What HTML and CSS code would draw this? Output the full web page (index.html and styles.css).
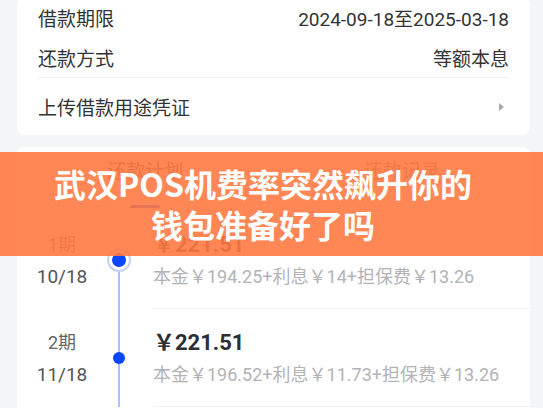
FILE: index.html
```html
<!DOCTYPE html>
<html lang="zh-CN">
<head>
  <meta charset="UTF-8">
  <meta name="viewport" content="width=device-width, initial-scale=1.0">
  <title>还款计划</title>
  <link rel="stylesheet" href="styles.css">
</head>
<body>
  <div class="page">
    <section class="card info">
      <div class="row"><span>借款期限</span><span>2024-09-18至2025-03-18</span></div>
      <div class="row"><span>还款方式</span><span>等额本息</span></div>
      <div class="row link"><span>上传借款用途凭证</span><span class="arrow"></span></div>
    </section>

    <section class="card plan">
      <div class="tabs">
        <div class="tab active">还款计划</div>
        <div class="tab">还款记录</div>
      </div>

      <div class="item first">
        <div class="when"><div>1期</div><div>10/18</div></div>
        <div class="axis"><span class="dot current"></span></div>
        <div class="detail">
          <div class="amount">￥221.51</div>
          <div class="parts">本金￥194.25+利息￥14+担保费￥13.26</div>
        </div>
      </div>

      <div class="item">
        <div class="when"><div>2期</div><div>11/18</div></div>
        <div class="axis"><span class="dot"></span></div>
        <div class="detail">
          <div class="amount">￥221.51</div>
          <div class="parts">本金￥196.52+利息￥11.73+担保费￥13.26</div>
        </div>
      </div>
    </section>
  </div>

  <div class="banner">武汉POS机费率突然飙升你的<br>钱包准备好了吗</div>
</body>
</html>
```

FILE: styles.css
```css
* { box-sizing: border-box; }
body { margin: 0; background: #f4f5f7; font-family: Roboto, "Noto Sans CJK SC", sans-serif; color: #333; }
.page { padding: 0 13px 0 17px; }
.card { background: #fff; border-radius: 8px; }

/* loan info */
.info { margin-top: -3px; padding: 0 21px; }
.row { display: flex; justify-content: space-between; align-items: center; height: 40px; font-size: 19px; }
.row.link { height: 58px; border-top: 1px solid #eeeff1; }
.arrow { width: 0; height: 0; margin-right: 5px; border-left: 5px solid #a8a8ad; border-top: 4px solid transparent; border-bottom: 4px solid transparent; }

/* repayment plan */
.plan { margin-top: 12px; padding-bottom: 20px; }
.tabs { display: flex; height: 64px; }
.tab { flex: 1; position: relative; text-align: center; padding-top: 13px; line-height: 24px; font-size: 19px; color: #666; }
.tab.active { color: #333; }
.tab.active::after { content: ""; position: absolute; left: 50%; bottom: 3px; width: 30px; height: 3px; margin-left: -15px; border-radius: 2px; background: #0a46ff; }

.item { display: flex; }
.when { width: 90px; padding-top: 18px; text-align: center; font-size: 19px; line-height: 32px; color: #555; }
.when div:first-child { font-size: 18px; color: #666; }
.axis { width: 24px; position: relative; }
.axis::before { content: ""; position: absolute; left: 11px; top: 0; bottom: 0; width: 2px; background: #a9c2f7; }
.first .axis::before { top: 49px; }
.dot { position: absolute; left: 6px; top: 43px; width: 12px; height: 12px; border-radius: 50%; background: #0a46ff; }
.dot.current { left: 5px; top: 42px; width: 14px; height: 14px; box-shadow: 0 0 0 3px #fff, 0 0 0 5px #c6d3ee; }
.detail { flex: 1; margin-left: 22px; padding: 18px 0 15px 0; border-bottom: 1px solid #f0f1f3; }
.amount { font-size: 22px; font-weight: 700; line-height: 32px; color: #2e2f33; }
.parts { font-size: 18px; line-height: 32px; color: #b3b3b6; white-space: nowrap; }

/* headline overlay */
.banner { position: absolute; top: 152px; left: 0; right: 0; height: 104px; padding: 11px 17px 0 0; background: rgba(255, 122, 66, 0.9); color: #fff; text-align: center; font-family: "Noto Sans CJK SC", sans-serif; font-weight: 700; font-size: 32px; line-height: 41px; }
```
